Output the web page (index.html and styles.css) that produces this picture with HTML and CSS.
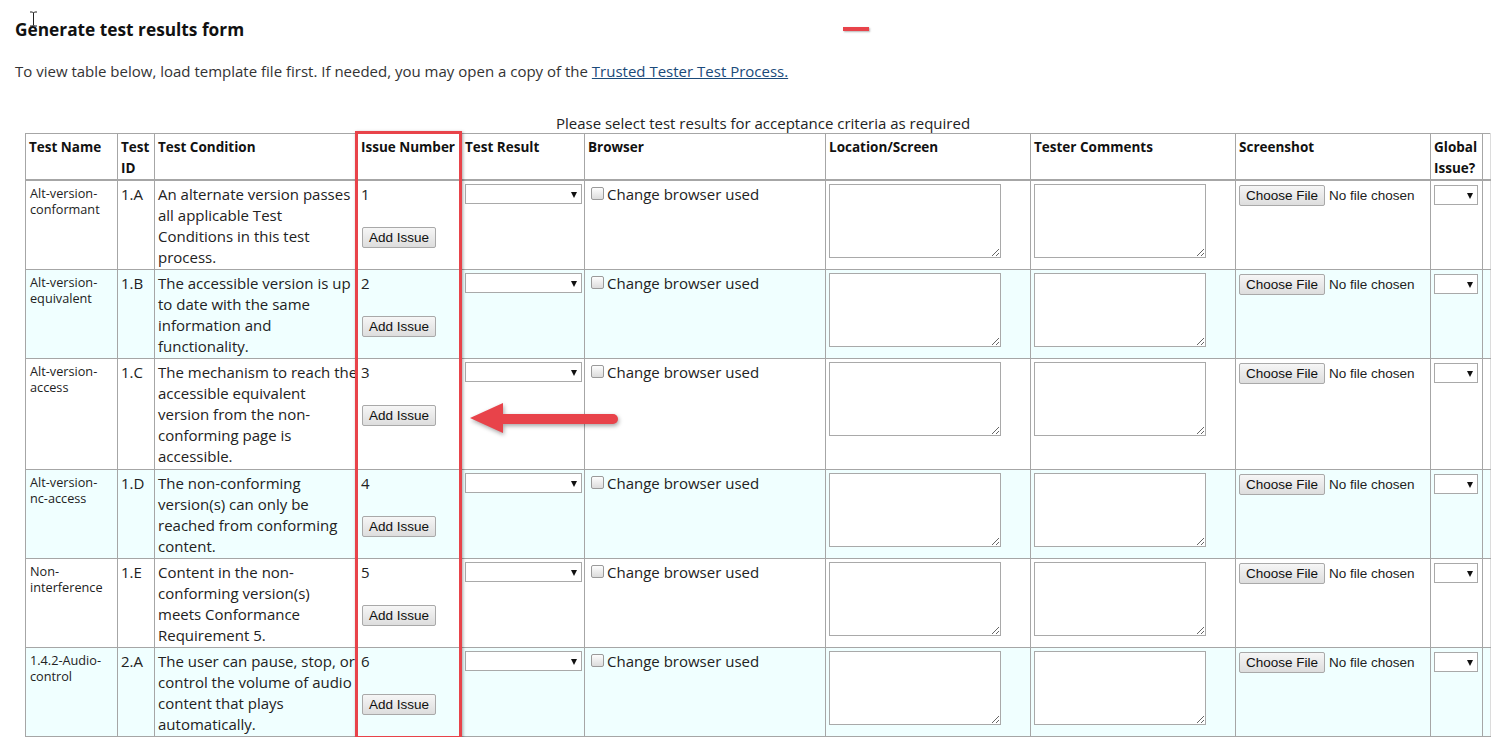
FILE: index.html
```html
<!DOCTYPE html>
<html lang="en">
<head>
<meta charset="utf-8">
<title>Generate test results form</title>
<link rel="stylesheet" href="styles.css">
</head>
<body>
<div class="page">
  <h2 class="title">Generate test results form</h2>
  <p class="intro">To view table below, load template file first. If needed, you may open a copy of the <a href="#">Trusted Tester Test Process.</a></p>

  <table class="results">
    <caption>Please select test results for acceptance criteria as required</caption>
    <colgroup>
      <col class="c-name"><col class="c-id"><col class="c-cond"><col class="c-issue"><col class="c-result"><col class="c-browser"><col class="c-loc"><col class="c-comm"><col class="c-shot"><col class="c-global"><col class="c-extra">
    </colgroup>
    <thead>
      <tr>
        <th>Test Name</th><th>Test ID</th><th>Test Condition</th><th>Issue Number</th><th>Test Result</th><th>Browser</th><th>Location/Screen</th><th>Tester Comments</th><th>Screenshot</th><th>Global Issue?</th><th class="extra"></th>
      </tr>
    </thead>
    <tbody>
      <tr>
        <td class="name">Alt-version-<br>conformant</td>
        <td class="id">1.A</td>
        <td class="cond">An alternate version passes<br>all applicable Test<br>Conditions in this test<br>process.</td>
        <td class="issue">1<br><br><button class="btn">Add Issue</button></td>
        <td><span class="sel wide"><select><option></option></select></span></td>
        <td class="browser"><label><input type="checkbox">Change browser used</label></td>
        <td><textarea></textarea></td>
        <td><textarea></textarea></td>
        <td class="shot"><button class="btn">Choose File</button><span class="nofile">No file chosen</span></td>
        <td><span class="sel narrow"><select><option></option></select></span></td>
        <td class="extra"></td>
      </tr>
      <tr class="alt">
        <td class="name">Alt-version-<br>equivalent</td>
        <td class="id">1.B</td>
        <td class="cond">The accessible version is up<br>to date with the same<br>information and<br>functionality.</td>
        <td class="issue">2<br><br><button class="btn">Add Issue</button></td>
        <td><span class="sel wide"><select><option></option></select></span></td>
        <td class="browser"><label><input type="checkbox">Change browser used</label></td>
        <td><textarea></textarea></td>
        <td><textarea></textarea></td>
        <td class="shot"><button class="btn">Choose File</button><span class="nofile">No file chosen</span></td>
        <td><span class="sel narrow"><select><option></option></select></span></td>
        <td class="extra"></td>
      </tr>
      <tr class="tall">
        <td class="name">Alt-version-<br>access</td>
        <td class="id">1.C</td>
        <td class="cond">The mechanism to reach the<br>accessible equivalent<br>version from the non-<br>conforming page is<br>accessible.</td>
        <td class="issue">3<br><br><button class="btn">Add Issue</button></td>
        <td><span class="sel wide"><select><option></option></select></span></td>
        <td class="browser"><label><input type="checkbox">Change browser used</label></td>
        <td><textarea></textarea></td>
        <td><textarea></textarea></td>
        <td class="shot"><button class="btn">Choose File</button><span class="nofile">No file chosen</span></td>
        <td><span class="sel narrow"><select><option></option></select></span></td>
        <td class="extra"></td>
      </tr>
      <tr class="alt">
        <td class="name">Alt-version-<br>nc-access</td>
        <td class="id">1.D</td>
        <td class="cond">The non-conforming<br>version(s) can only be<br>reached from conforming<br>content.</td>
        <td class="issue">4<br><br><button class="btn">Add Issue</button></td>
        <td><span class="sel wide"><select><option></option></select></span></td>
        <td class="browser"><label><input type="checkbox">Change browser used</label></td>
        <td><textarea></textarea></td>
        <td><textarea></textarea></td>
        <td class="shot"><button class="btn">Choose File</button><span class="nofile">No file chosen</span></td>
        <td><span class="sel narrow"><select><option></option></select></span></td>
        <td class="extra"></td>
      </tr>
      <tr>
        <td class="name">Non-<br>interference</td>
        <td class="id">1.E</td>
        <td class="cond">Content in the non-<br>conforming version(s)<br>meets Conformance<br>Requirement 5.</td>
        <td class="issue">5<br><br><button class="btn">Add Issue</button></td>
        <td><span class="sel wide"><select><option></option></select></span></td>
        <td class="browser"><label><input type="checkbox">Change browser used</label></td>
        <td><textarea></textarea></td>
        <td><textarea></textarea></td>
        <td class="shot"><button class="btn">Choose File</button><span class="nofile">No file chosen</span></td>
        <td><span class="sel narrow"><select><option></option></select></span></td>
        <td class="extra"></td>
      </tr>
      <tr class="alt">
        <td class="name">1.4.2-Audio-<br>control</td>
        <td class="id">2.A</td>
        <td class="cond">The user can pause, stop, or<br>control the volume of audio<br>content that plays<br>automatically.</td>
        <td class="issue">6<br><br><button class="btn">Add Issue</button></td>
        <td><span class="sel wide"><select><option></option></select></span></td>
        <td class="browser"><label><input type="checkbox">Change browser used</label></td>
        <td><textarea></textarea></td>
        <td><textarea></textarea></td>
        <td class="shot"><button class="btn">Choose File</button><span class="nofile">No file chosen</span></td>
        <td><span class="sel narrow"><select><option></option></select></span></td>
        <td class="extra"></td>
      </tr>
    </tbody>
  </table>

  <div class="hl-box"></div>
  <div class="hl-dash"></div>
  <svg class="hl-arrow" width="160" height="44" viewBox="0 0 160 44">
    <path d="M34 14 L146 14 A5 5 0 0 1 146 24 L34 24 Z" fill="#e8434a"/>
    <path d="M3 18 L36 3 L36 33 Z" fill="#e8434a"/>
  </svg>
  <svg class="cursor" width="9" height="16" viewBox="0 0 9 16">
    <path d="M1 1h2.5l1 1 1-1H8M4.5 2v12M1 15h2.5l1-1 1 1H8" fill="none" stroke="#222" stroke-width="1"/>
  </svg>
</div>
</body>
</html>
```

FILE: styles.css
```css
html, body {
  margin: 0;
  padding: 0;
  overflow: hidden;
  background: #fff;
}

body {
  font-family: "Open Sans", "Noto Sans", "DejaVu Sans", sans-serif;
  color: #222;
}

.page {
  position: relative;
  width: 1492px;
  height: 737px;
  overflow: hidden;
}

.title {
  margin: 0;
  padding: 18px 0 0 15px;
  font-size: 17.3px;
  line-height: 24px;
  font-weight: 700;
  color: #111;
}

.intro {
  margin: 0;
  padding: 19px 0 0 15px;
  font-size: 15px;
  line-height: 20px;
  color: #333;
}

.intro a {
  color: #1b4a7a;
  text-decoration: underline;
}

.results {
  margin: 33px 0 0 25px;
  border-collapse: collapse;
  table-layout: fixed;
  width: 1465px;
  font-size: 15px;
  color: #222;
}

.results caption {
  font-size: 15px;
  line-height: 19px;
  padding-left: 10px;
  color: #222;
}

.c-name { width: 92px; }
.c-id { width: 37px; }
.c-cond { width: 203px; }
.c-issue { width: 104px; }
.c-result { width: 123px; }
.c-browser { width: 241px; }
.c-loc { width: 205px; }
.c-comm { width: 205px; }
.c-shot { width: 195px; }
.c-global { width: 52px; }
.c-extra { width: 8px; }

.results th,
.results td {
  border: 1px solid #a6a6a6;
  padding: 3px 3px 1px;
  vertical-align: top;
  text-align: left;
  line-height: 21px;
}

.results tr.tall td {
  padding-bottom: 2px;
}

.results th {
  font-size: 13.5px;
  font-weight: 700;
  color: #111;
  height: 40px;
  padding-bottom: 0;
  line-height: 21px;
}

.results thead tr {
  border-bottom: 2px solid #a6a6a6;
}

.results th.extra,
.results td.extra {
  border-right-color: #dcdcdc;
  padding: 0;
}

.results tr.alt td {
  background: #f0ffff;
}

.results td.name {
  font-size: 12.7px;
  line-height: 16px;
  padding-top: 4px;
  padding-left: 4px;
}

.results td.cond {
  white-space: nowrap;
  overflow: visible;
}

.btn {
  font-family: "Liberation Sans", Arial, sans-serif;
  font-size: 13.5px;
  color: #111;
  height: 21px;
  padding: 0 6px;
  margin: 0;
  border: 1px solid #a9a9a9;
  border-radius: 2px;
  background: linear-gradient(#f6f6f6, #dddddd);
  vertical-align: top;
  line-height: 19px;
}

.issue .btn {
  margin-left: 1px;
  margin-top: 1px;
}

.shot .btn {
  margin-top: 1px;
}

.nofile {
  font-family: "Liberation Sans", Arial, sans-serif;
  font-size: 13.5px;
  color: #222;
  margin-left: 4px;
  line-height: 23px;
}

.sel {
  position: relative;
  display: inline-block;
  vertical-align: top;
}

.sel select {
  -webkit-appearance: none;
  appearance: none;
  display: block;
  height: 20px;
  margin: 0;
  border: 1px solid #a9a9a9;
  border-radius: 0;
  background: #fff;
}

.sel.wide select { width: 117px; }
.sel.narrow select { width: 44px; margin-top: 1px; }

.sel::after {
  content: "";
  position: absolute;
  right: 5px;
  top: 8px;
  border-left: 3.5px solid transparent;
  border-right: 3.5px solid transparent;
  border-top: 6px solid #111;
}

.sel.narrow::after { top: 9px; }

.browser label {
  display: inline-flex;
  align-items: flex-start;
}

.browser input[type="checkbox"] {
  -webkit-appearance: none;
  appearance: none;
  width: 13px;
  height: 13px;
  margin: 3px 3px 0 3px;
  border: 1px solid #9a9a9a;
  border-radius: 2px;
  background: linear-gradient(#fdfdfd, #dcdcdc);
  flex: none;
}

textarea {
  display: block;
  width: 172px;
  height: 74px;
  margin: 0;
  padding: 2px;
  box-sizing: border-box;
  border: 1px solid #a9a9a9;
  background: #fff;
}

.hl-box {
  position: absolute;
  left: 355px;
  top: 131px;
  width: 107px;
  height: 608px;
  box-sizing: border-box;
  border: 3px solid #e8434a;
  box-shadow: 1px 1px 3px rgba(0, 0, 0, 0.35);
}

.hl-dash {
  position: absolute;
  left: 843px;
  top: 27px;
  width: 26px;
  height: 4px;
  background: #e8434a;
  box-shadow: 1px 1px 2px rgba(0, 0, 0, 0.3);
}

.hl-arrow {
  position: absolute;
  left: 467px;
  top: 400px;
  filter: drop-shadow(1px 2px 2px rgba(0, 0, 0, 0.35));
}

.cursor {
  position: absolute;
  left: 29px;
  top: 11px;
}
```
